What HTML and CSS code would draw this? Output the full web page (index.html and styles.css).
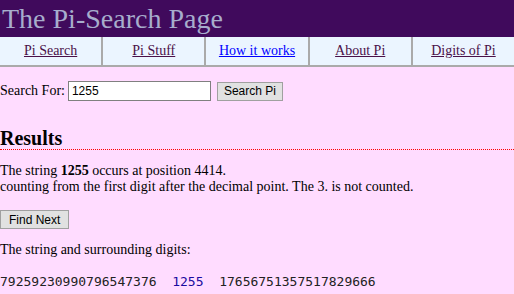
FILE: index.html
```html
<!DOCTYPE html>
<html lang="en">
<head>
    <meta charset="UTF-8">
    <meta name="viewport" content="width=device-width, initial-scale=1.0">
    <title>The Pi-Search Page</title>
    <link rel="stylesheet" href="styles.css">
</head>
<body>
    <div class="top">
        <h1>The Pi-Search Page</h1>
    </div>

    <div class="tabs">
        <div class="tab"><a class="seen" href="#">Pi Search</a></div>
        <div class="tab"><a class="seen" href="#">Pi Stuff</a></div>
        <div class="tab"><a href="#">How it works</a></div>
        <div class="tab"><a class="seen" href="#">About Pi</a></div>
        <div class="tab"><a class="seen" href="#">Digits of Pi</a></div>
    </div>

    <form class="search" onsubmit="return false">
        <label for="q">Search For:</label>
        <input id="q" type="text" value="1255">
        <button type="submit">Search Pi</button>
    </form>

    <h2 class="results">Results</h2>

    <p class="found">The string <b>1255</b> occurs at position 4414.<br>
    counting from the first digit after the decimal point. The 3. is not counted.</p>

    <button class="next">Find Next</button>

    <p class="around">The string and surrounding digits:</p>

    <pre class="digits">79259230990796547376  <span class="hit">1255</span>  17656751357517829666</pre>
</body>
</html>
```

FILE: styles.css
```css
body {
    margin: 0;
    background-color: #ffdcff;
    font-family: "Liberation Serif", "Times New Roman", serif;
    font-size: 14px;
    color: #000;
}
.top {
    background-color: #400a5c;
    height: 37px;
}
.top h1 {
    margin: 0;
    padding-left: 2px;
    font-weight: normal;
    font-size: 28px;
    line-height: 37px;
    color: #a7adcc;
}
.tabs {
    display: flex;
    background-color: #ebf5ff;
    border-bottom: 2px solid #aaaaaa;
}
.tab {
    flex: 1;
    height: 28px;
    line-height: 28px;
    text-align: center;
    border-right: 2px solid #aaaaaa;
}
.tab:last-child {
    border-right: none;
}
.tab a {
    color: #0000ff;
}
.tab a.seen {
    color: #4a1048;
}
.search {
    display: flex;
    align-items: center;
    margin: 14px 0 0 0;
    height: 20px;
}
.search label {
    margin-right: 3px;
}
.search input {
    box-sizing: border-box;
    width: 143px;
    height: 20px;
    padding: 1px 3px;
    border: 1px solid #808080;
    font-family: "Liberation Sans", Arial, sans-serif;
    font-size: 12px;
}
button {
    box-sizing: border-box;
    font-family: "Liberation Sans", Arial, sans-serif;
    font-size: 12px;
    background-color: #e1e1e1;
    border: 1px solid #a0a0a0;
    padding: 0 8px;
    color: #000;
    height: 19px;
}
.search button {
    margin-left: 6px;
    padding: 0 6px;
}
.results {
    margin: 26px 0 0 0;
    font-size: 20px;
    line-height: 22px;
    border-bottom: 1px dotted #ff0000;
}
.found {
    margin: 13px 0 0 0;
    line-height: 16px;
}
.next {
    margin-top: 15px;
    display: block;
}
.around {
    margin: 13px 0 0 0;
    line-height: 16px;
}
.digits {
    margin: 16px 0 0 0;
    font-family: "DejaVu Sans Mono", monospace;
    font-size: 13px;
    line-height: 15px;
    color: #222;
}
.hit {
    color: #1a0aa0;
}
```
